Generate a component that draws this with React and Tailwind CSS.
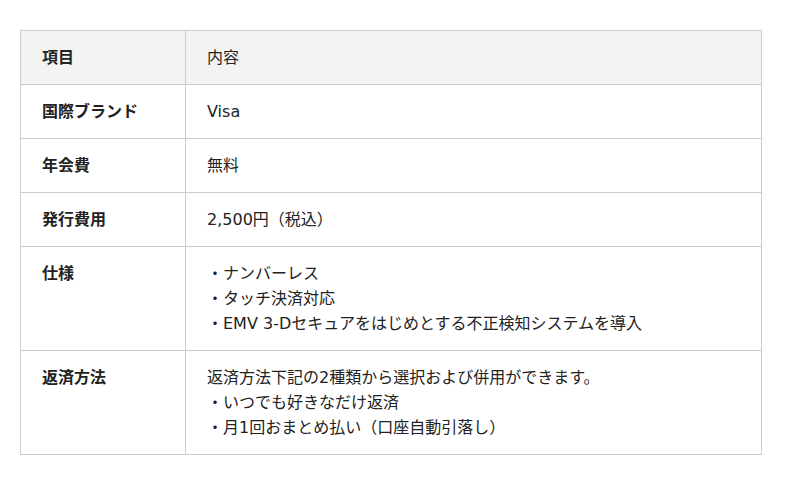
export default function App() {
    const rows = [
        { label: "国際ブランド", lines: ["Visa"] },
        { label: "年会費", lines: ["無料"] },
        { label: "発行費用", lines: ["2,500円（税込）"] },
        {
            label: "仕様",
            lines: [
                "・ナンバーレス",
                "・タッチ決済対応",
                "・EMV 3-Dセキュアをはじめとする不正検知システムを導入",
            ],
        },
        {
            label: "返済方法",
            lines: [
                "返済方法下記の2種類から選択および併用ができます。",
                "・いつでも好きなだけ返済",
                "・月1回おまとめ払い（口座自動引落し）",
            ],
        },
    ];

    return (
        <div className="w-[800px] h-[485px] bg-white pt-[30px] pl-[20px] font-['DejaVu_Sans','Noto_Sans_CJK_JP',sans-serif] text-[16px] leading-[25px] text-[#222]">
            <table className="w-[742px] border-collapse border border-[#cccccc]">
                <tbody>
                    <tr className="bg-[#f3f3f3]">
                        <th className="w-[165px] border border-[#cccccc] px-[21px] py-[14px] text-left align-top font-bold">
                            項目
                        </th>
                        <td className="border border-[#cccccc] px-[21px] py-[14px] align-top">内容</td>
                    </tr>
                    {rows.map((row, i) => (
                        <tr key={i}>
                            <th className="w-[165px] border border-[#cccccc] px-[21px] py-[14px] text-left align-top font-bold">
                                {row.label}
                            </th>
                            <td className="border border-[#cccccc] px-[21px] py-[14px] align-top">
                                {row.lines.map((line, j) => (
                                    <div key={j}>{line}</div>
                                ))}
                            </td>
                        </tr>
                    ))}
                </tbody>
            </table>
        </div>
    );
}
